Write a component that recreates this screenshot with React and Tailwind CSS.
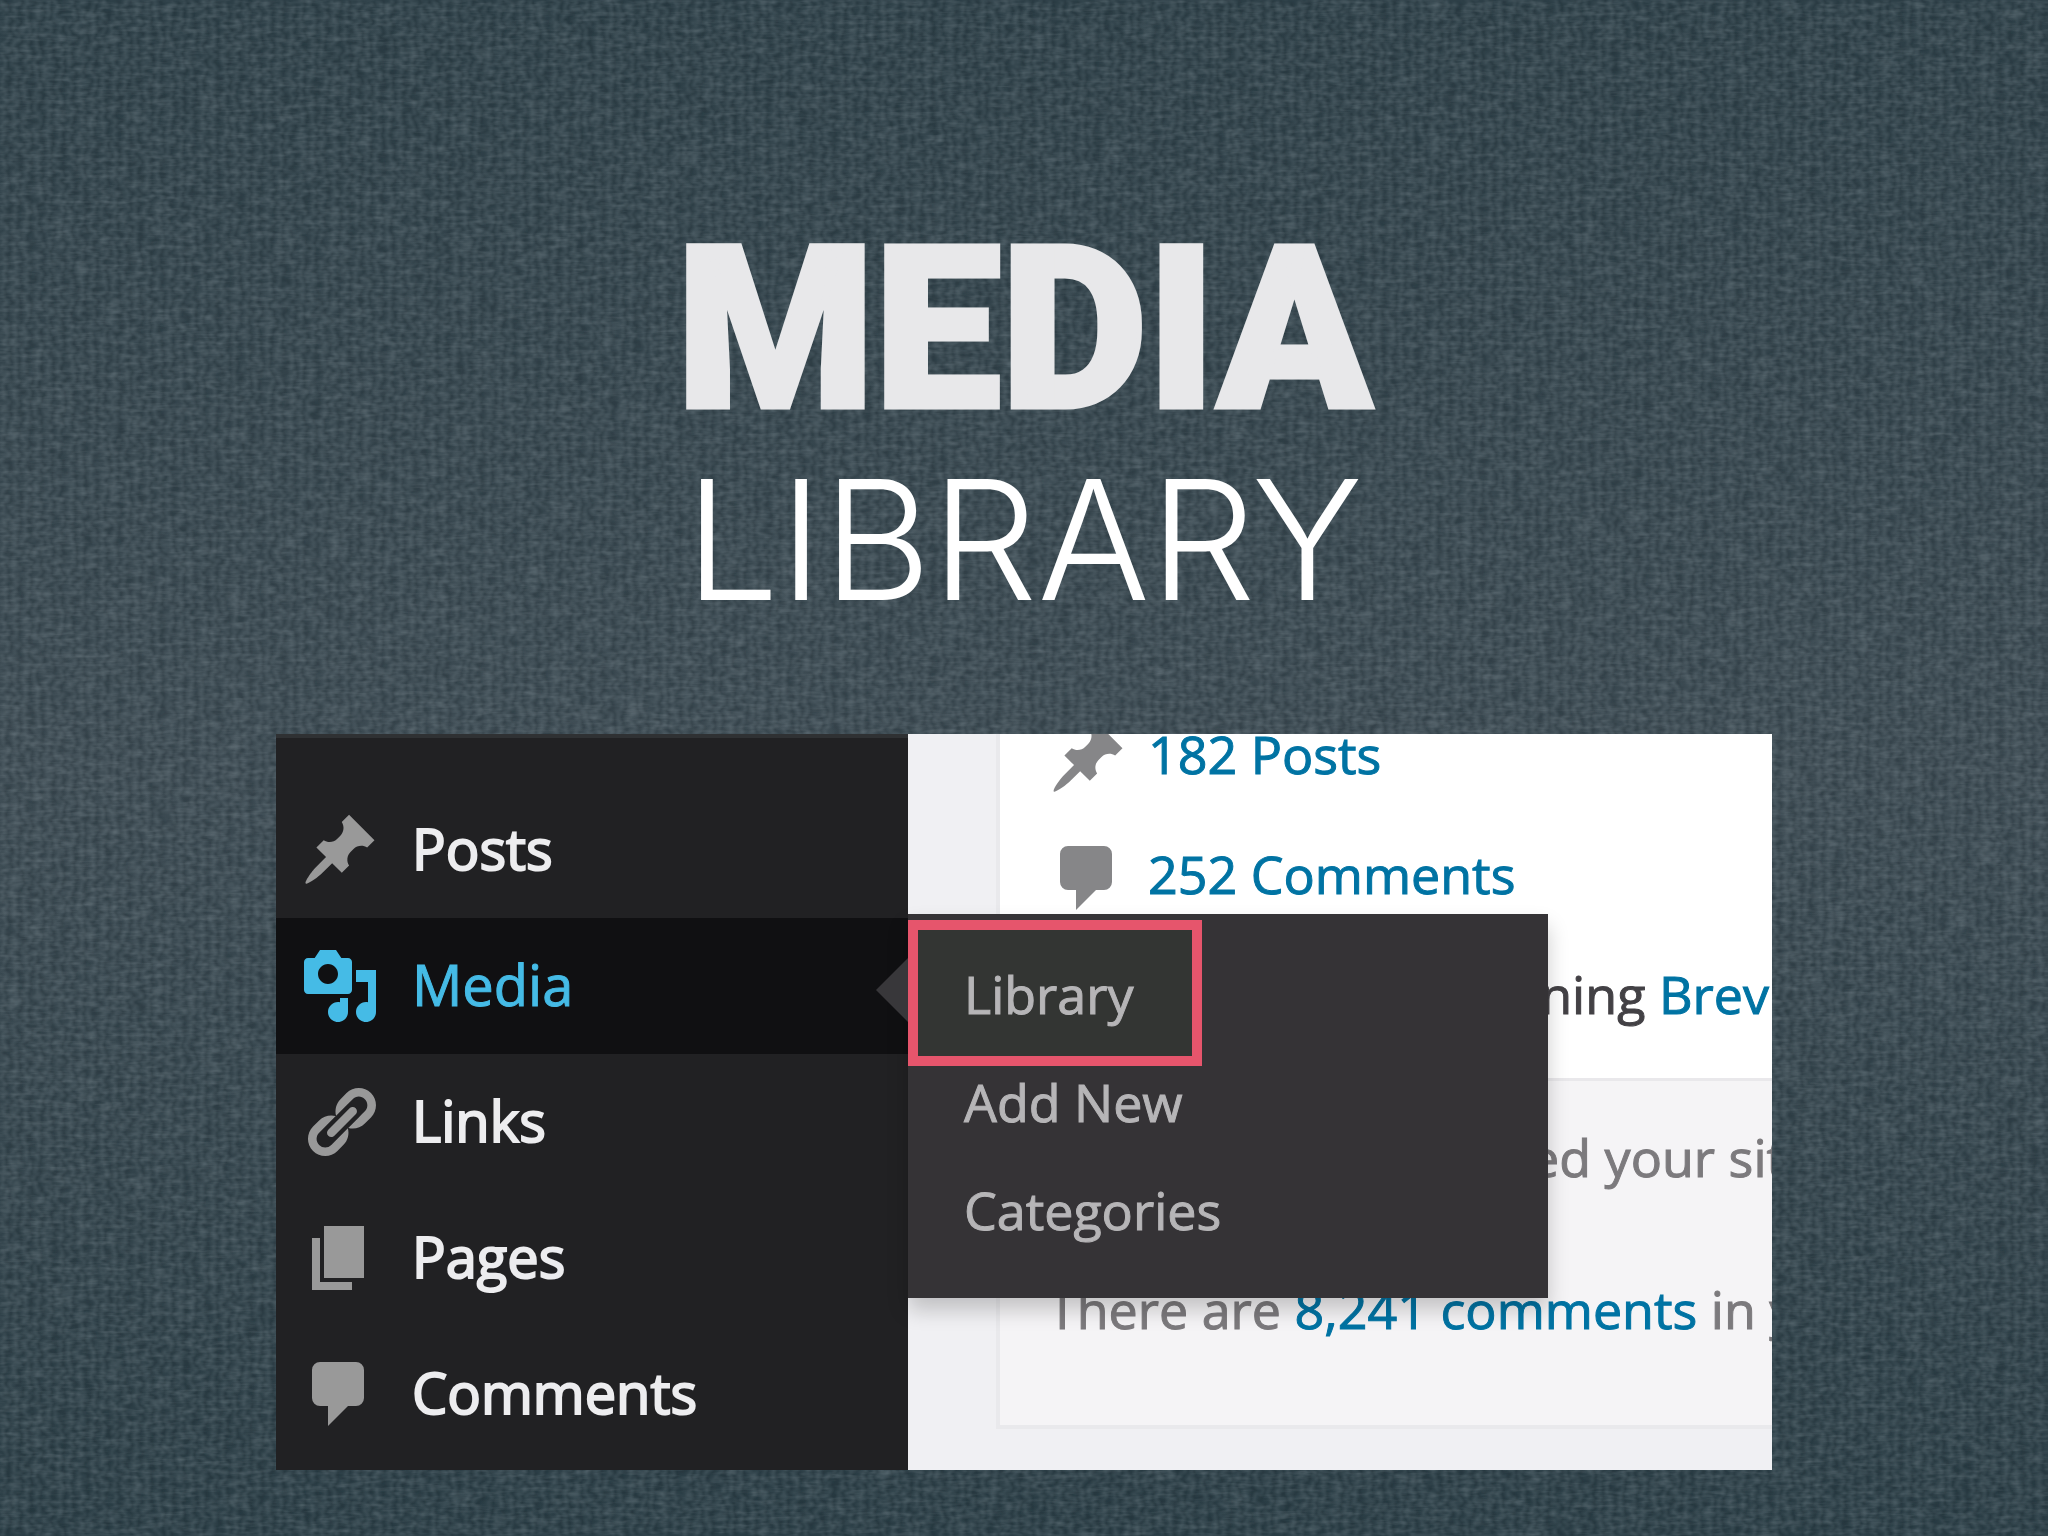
import React from 'react';

const ICONS = {
    post: 'M10.44 3.02l1.82-1.82 6.36 6.35-1.83 1.82c-1.05-.68-2.48-.57-3.41.36l-.75.75c-.92.93-1.04 2.35-.35 3.41l-1.83 1.82-2.41-2.41-2.8 2.79c-.42.42-3.38 2.71-3.8 2.29s1.86-3.39 2.28-3.81l2.79-2.79L4.1 9.36l1.83-1.82c1.05.69 2.48.57 3.4-.36l.75-.75c.93-.92 1.05-2.35.36-3.41z',
    media: 'M13 11V4c0-.55-.45-1-1-1h-1.67L9 1H5L3.67 3H2c-.55 0-1 .45-1 1v7c0 .55.45 1 1 1h10c.55 0 1-.45 1-1zM7 4.5c1.38 0 2.5 1.12 2.5 2.5S8.38 9.5 7 9.5 4.5 8.38 4.5 7 5.62 4.5 7 4.5zM14 6h5v10.5c0 1.38-1.12 2.5-2.5 2.5S14 17.88 14 16.5s1.12-2.5 2.5-2.5c.17 0 .34.02.5.05V9h-3V6zm-4 8.05V13h2v3.5c0 1.38-1.12 2.5-2.5 2.5S7 17.88 7 16.5 8.12 14 9.5 14c.17 0 .34.02.5.05z',
    link: 'M17.74 2.76c1.68 1.69 1.68 4.41 0 6.1l-1.53 1.52c-1.12 1.12-2.7 1.47-4.14 1.09l2.62-2.61.76-.77.76-.76c.84-.84.84-2.2 0-3.04-.84-.85-2.2-.85-3.04 0l-.77.76-3.38 3.38c-.37-1.44-.02-3.02 1.1-4.14l1.52-1.53c1.69-1.68 4.42-1.68 6.1 0zM8.59 13.43l5.34-5.34c.42-.42.42-1.1 0-1.52-.44-.43-1.13-.39-1.53 0l-5.33 5.34c-.42.42-.42 1.1 0 1.52.44.43 1.13.39 1.52 0zm-.76 2.29l4.14-4.15c.38 1.44.03 3.02-1.09 4.14l-1.52 1.53c-1.69 1.68-4.41 1.68-6.1 0-1.68-1.68-1.68-4.42 0-6.1l1.53-1.52c1.12-1.12 2.7-1.47 4.14-1.1l-4.14 4.15c-.85.84-.85 2.2 0 3.05.84.84 2.2.84 3.04 0z',
    page: 'M6 15V2h10v13H6zm-1 1h8v2H3V5h2v11z',
    comment: 'M5 2h9q.82 0 1.41.59T16 4v7q0 .82-.59 1.41T14 13h-2l-5 5v-5H5q-.82 0-1.41-.59T3 11V4q0-.82.59-1.41T5 2z',
};

const MENU = [
    { label: 'Posts', icon: 'post' },
    { label: 'Media', icon: 'media', submenu: ['Library', 'Add New', 'Categories'] },
    { label: 'Links', icon: 'link' },
    { label: 'Pages', icon: 'page' },
    { label: 'Comments', icon: 'comment' },
];

const Icon = ({ name, className }) => (
    <svg viewBox="0 0 20 20" fill="currentColor" aria-hidden="true" className={`size-20 shrink-0 ${className}`}>
        <path d={ICONS[name]} />
    </svg>
);

// Knitted fabric behind the slide
const Fabric = () => (
    <svg className="absolute inset-0 size-full" aria-hidden="true">
        <defs>
            <pattern id="knit" width="11" height="9" patternUnits="userSpaceOnUse">
                <path d="M1 -1L6 4L1 10" stroke="#8e9ca3" strokeWidth="2" fill="none" />
                <path d="M6 -1L11 4L6 10" stroke="#0b1a20" strokeWidth="2" fill="none" />
            </pattern>
            <filter id="rough" x="0" y="0" width="100%" height="100%">
                <feTurbulence type="fractalNoise" baseFrequency="0.06 0.12" numOctaves="3" seed="4" result="noise" />
                <feDisplacementMap in="SourceGraphic" in2="noise" scale="16" xChannelSelector="R" yChannelSelector="G" />
                <feGaussianBlur stdDeviation="0.9" />
            </filter>
            <filter id="grain" x="0" y="0" width="100%" height="100%">
                <feTurbulence type="fractalNoise" baseFrequency="0.04 0.24" numOctaves="3" seed="9" />
                <feColorMatrix type="matrix" values="0 0 0 0 0.47  0 0 0 0 0.54  0 0 0 0 0.58  1.6 0 0 0 -0.62" />
            </filter>
        </defs>
        <rect width="100%" height="100%" fill="url(#knit)" filter="url(#rough)" opacity="0.2" />
        <rect width="100%" height="100%" filter="url(#grain)" opacity="0.2" />
    </svg>
);

const Submenu = ({ items }) => (
    <ul className="absolute left-full -top-1 z-20 w-[640px] pt-[26px] pb-[34px] bg-[#353336] shadow-[0_12px_20px_rgba(0,0,0,0.2)]">
        <li className="absolute -left-8 top-11 border-y-[32px] border-r-[32px] border-y-transparent border-r-[#38373a]" aria-hidden="true" />
        {items.map((item, i) => (
            <li key={item} className="relative">
                {i === 0 && <span className="absolute left-0 -top-5 w-[294px] h-[146px] border-[10px] border-[#e6556c] bg-[#333533]" />}
                <a href="#" className="relative flex items-center h-[108px] px-14 text-[52px] text-[#b6b5b7]">{item}</a>
            </li>
        ))}
    </ul>
);

const Sidebar = () => (
    <nav className="relative z-10 w-[632px] shrink-0 border-t-4 border-[#2f3133] bg-[#212123] pt-11 pb-2">
        <ul>
            {MENU.map(({ label, icon, submenu }) => (
                <li key={label} className={submenu ? 'relative bg-[#101012]' : ''}>
                    <a href="#" className={`flex items-center gap-8 h-[136px] pl-6 text-[56px] ${submenu ? 'text-[#45bbe6]' : 'text-[#ededef] [-webkit-text-stroke:2px]'}`}>
                        <Icon name={icon} className={submenu ? '' : 'text-[#999999]'} />
                        <span className="pb-1">{label}</span>
                    </a>
                    {submenu && <Submenu items={submenu} />}
                </li>
            ))}
        </ul>
    </nav>
);

const Glance = () => (
    <section className="flex-1 min-w-0 overflow-hidden bg-[#f0f0f3] pl-[88px] pb-10 whitespace-nowrap text-[52px]">
        <div className="border-l-4 border-b-4 border-[#e9e9ec] bg-white">
            <ul className="-mt-9 pl-12 pb-5">
                <li className="flex items-center gap-5 h-[120px]">
                    <Icon name="post" className="text-[#868688]" />
                    <a href="#" className="pb-2 text-[#0073a3]">182 Posts</a>
                </li>
                <li className="flex items-center gap-5 h-[120px]">
                    <Icon name="comment" className="text-[#868688]" />
                    <a href="#" className="pb-2 text-[#0073a3]">252 Comments</a>
                </li>
                <li className="flex items-center h-[120px]">
                    <p className="pb-2 text-[#434145]">WordPress 4.0.1 running <a href="#" className="text-[#0073a3]">Brevity</a></p>
                </li>
            </ul>
            <div className="border-t-[3px] border-[#e9e8eb] bg-[#f5f4f6] pl-12 pb-10 text-[#7c7a7d]">
                <p className="leading-[152px]">Akismet has protected your site</p>
                <p className="leading-[152px]">There are <a href="#" className="text-[#0073a3]">8,241 comments</a> in your spam queue</p>
            </div>
        </div>
    </section>
);

export default function App() {
    return (
        <main className="relative min-h-screen overflow-hidden bg-linear-to-b from-[#2d3f47] via-[#3c4a52] to-[#2a3d45]">
            <Fabric />
            <div className="relative flex flex-col items-center pt-[213px] pb-16">
                <h1 className="flex flex-col items-center text-center">
                    <span className="font-['Roboto',sans-serif] font-black text-[226px] leading-[234px] text-[#e8e8ea] [-webkit-text-stroke:5px_#e8e8ea]">MEDIA</span>
                    <span className="font-['Inter',sans-serif] font-light text-[167px] leading-[184px] text-white">LIBRARY</span>
                </h1>
                <div className="mt-[103px] flex w-full max-w-[1496px] overflow-hidden font-['Open_Sans',sans-serif] [-webkit-text-stroke:1px]">
                    <Sidebar />
                    <Glance />
                </div>
            </div>
        </main>
    );
}
